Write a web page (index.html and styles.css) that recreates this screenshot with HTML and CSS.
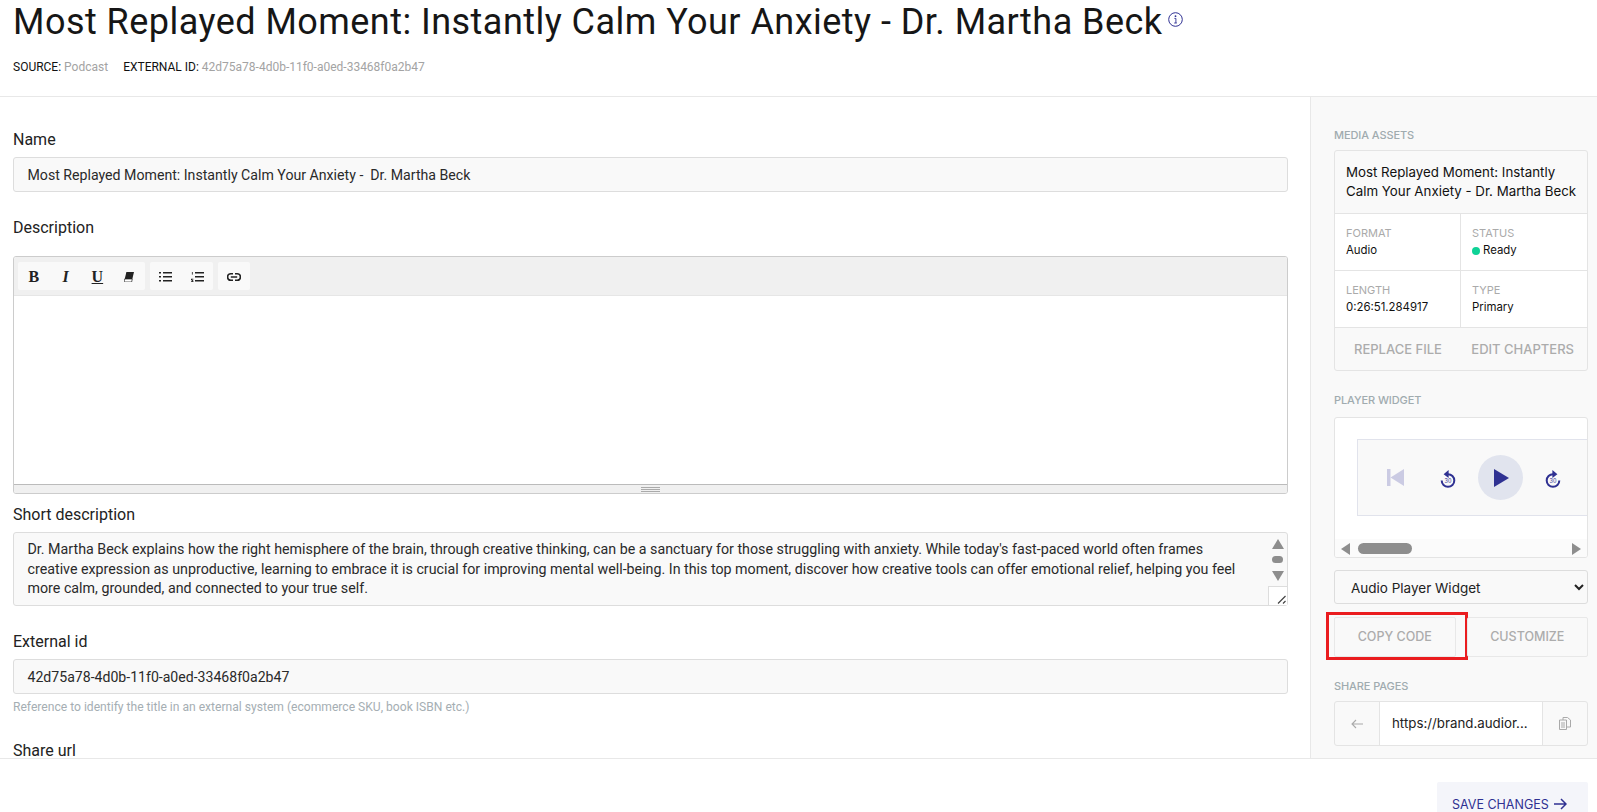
FILE: index.html
```html
<!DOCTYPE html>
<html lang="en">
<head>
<meta charset="utf-8">
<title>Most Replayed Moment</title>
<link rel="stylesheet" href="styles.css">
</head>
<body>
<div class="page">
  <header class="head">
    <h1 class="title"><span>Most Replayed Moment: Instantly Calm Your Anxiety - Dr. Martha Beck</span>
      <svg class="info" width="15" height="15" viewBox="0 0 15 15"><circle cx="7.5" cy="7.5" r="6.8" fill="none" stroke="#2f3192" stroke-width="1"/><circle cx="7.5" cy="4.2" r=".9" fill="#2f3192"/><path d="M6.4 6.4h1.5v4.6M6.2 11h2.6" fill="none" stroke="#2f3192" stroke-width=".9"/></svg>
    </h1>
    <div class="meta"><span class="k">SOURCE:</span> <span class="v">Podcast</span><span class="k gap">EXTERNAL ID:</span> <span class="v">42d75a78-4d0b-11f0-a0ed-33468f0a2b47</span></div>
  </header>
  <main class="body">
    <section class="form">
      <div class="label first">Name</div>
      <div class="field">Most Replayed Moment: Instantly Calm Your Anxiety -&nbsp; Dr. Martha Beck</div>
      <div class="label desc">Description</div>
      <div class="editor">
        <div class="toolbar">
          <div class="group g1">
            <span class="tool b">B</span><span class="tool i">I</span><span class="tool u">U</span>
            <span class="tool"><svg width="10" height="10" viewBox="0 0 10 10"><path d="M2.400 0H10L8.300 7H.7z" fill="#222"/><path d="M.7 7h7.600L7.600 10H0z" fill="#fff" stroke="#222" stroke-width=".7"/></svg></span>
          </div>
          <div class="group g2">
            <span class="tool"><svg width="13" height="10" viewBox="0 0 13 10" fill="#222"><rect x="0" y="0" width="2" height="1.500"/><rect x="4" y="0" width="9" height="1.500"/><rect x="0" y="4" width="2" height="1.500"/><rect x="4" y="4" width="9" height="1.500"/><rect x="0" y="8" width="2" height="1.500"/><rect x="4" y="8" width="9" height="1.500"/></svg></span>
            <span class="tool"><svg width="13" height="10" viewBox="0 0 13 10" fill="#222"><rect x=".9" y="0" width=".8" height="2.600"/><path d="M0 6.800h2.400v.7H1l1.400 1.300V10H0v-.7h1.400L0 7.800z"/><rect x="4" y="0" width="9" height="1.500"/><rect x="4" y="4" width="9" height="1.500"/><rect x="4" y="8" width="9" height="1.500"/></svg></span>
          </div>
          <div class="group g3">
            <span class="tool"><svg width="14" height="8" viewBox="0 0 14 8" fill="none" stroke="#222" stroke-width="1.500"><path d="M6 .8H3.800a3.200 3.200 0 0 0 0 6.400H6M8 .8h2.200a3.200 3.200 0 0 1 0 6.400H8M3.800 4h6.400"/></svg></span>
          </div>
        </div>
        <div class="canvas"></div>
        <div class="status"><i></i><i></i><i></i></div>
      </div>
      <div class="label short">Short description</div>
      <div class="area">
        <p class="area-text">Dr. Martha Beck explains how the right hemisphere of the brain, through creative thinking, can be a sanctuary for those struggling with anxiety. While today's fast-paced world often frames creative expression as unproductive, learning to embrace it is crucial for improving mental well-being. In this top moment, discover how creative tools can offer emotional relief, helping you feel more calm, grounded, and connected to your true self.</p>
        <div class="vbar">
          <span class="up"></span><span class="vthumb"></span><span class="down"></span>
          <span class="grip"><svg width="10" height="10" viewBox="0 0 10 10" fill="none" stroke="#444" stroke-width="1.200"><path d="M1 8.500L8.500 1M6 8.500L8.500 6"/></svg></span>
        </div>
      </div>
      <div class="label ext">External id</div>
      <div class="field id">42d75a78-4d0b-11f0-a0ed-33468f0a2b47</div>
      <div class="hint">Reference to identify the title in an external system (ecommerce SKU, book ISBN etc.)</div>
      <div class="label url">Share url</div>
    </section>
    <aside class="side">
      <div class="cap">MEDIA ASSETS</div>
      <div class="card asset">
        <div class="asset-title">Most Replayed Moment: Instantly Calm Your Anxiety - Dr. Martha Beck</div>
        <div class="cells">
          <div class="cell"><div class="ck">FORMAT</div><div class="cv">Audio</div></div>
          <div class="cell"><div class="ck">STATUS</div><div class="cv"><span class="dot"></span>Ready</div></div>
          <div class="cell"><div class="ck">LENGTH</div><div class="cv">0:26:51.284917</div></div>
          <div class="cell"><div class="ck">TYPE</div><div class="cv">Primary</div></div>
        </div>
        <div class="actions"><span>REPLACE FILE</span><span>EDIT CHAPTERS</span></div>
      </div>
      <div class="cap widget">PLAYER WIDGET</div>
      <div class="card player">
        <div class="stage">
          <div class="box">
            <svg class="prev" width="17" height="17" viewBox="0 0 17 17" fill="#cbcbe3"><rect x="0" y="0" width="3.500" height="17"/><path d="M17 0v17L3.500 8.500z"/></svg>
            <svg class="seek s1" width="16" height="18" viewBox="0 0 16 18"><path d="M8 4.200a6.300 6.300 0 1 1-6.300 6.300" fill="none" stroke="#2f3192" stroke-width="2"/><path d="M8.600 0v8L3.600 4.200z" fill="#2f3192"/><text x="8" y="13" text-anchor="middle" class="sec">30</text></svg>
            <span class="play"><svg width="15" height="18" viewBox="0 0 15 18"><path d="M0 0l15 9-15 9z" fill="#2f3192"/></svg></span>
            <svg class="seek s2" width="16" height="18" viewBox="0 0 16 18"><path d="M8 4.200a6.300 6.300 0 1 0 6.300 6.300" fill="none" stroke="#2f3192" stroke-width="2"/><path d="M7.400 0v8l5-3.800z" fill="#2f3192"/><text x="8" y="13" text-anchor="middle" class="sec">30</text></svg>
          </div>
        </div>
        <div class="hbar"><span class="left"></span><span class="hthumb"></span><span class="right"></span></div>
      </div>
      <select class="pick"><option>Audio Player Widget</option></select>
      <div class="btns">
        <div class="btn copy">COPY CODE<span class="mark"></span></div>
        <div class="btn">CUSTOMIZE</div>
      </div>
      <div class="cap pages">SHARE PAGES</div>
      <div class="share">
        <span class="sbtn"><svg width="12" height="10" viewBox="0 0 12 10" fill="none" stroke="#aaa" stroke-width="1.100"><path d="M12 5H1M5 1L1 5l4 4"/></svg></span>
        <span class="link">https://brand.audior...</span>
        <span class="sbtn"><svg width="12" height="13" viewBox="0 0 12 13" fill="none" stroke="#aaa" stroke-width="1"><path d="M.5 3h7v9.500h-7zM4 3V.5h4.500L11.500 3v7H7.500M2 6h4M2 8h4M2 10h4"/></svg></span>
      </div>
    </aside>
  </main>
  <footer class="foot">
    <div class="save">SAVE CHANGES <svg width="13" height="12" viewBox="0 0 13 12" fill="none" stroke="#2f3192" stroke-width="1.500"><path d="M0 6h12M7 1l5 5-5 5"/></svg></div>
  </footer>
</div>
</body>
</html>
```
FILE: styles.css
```css
* { box-sizing: border-box; }
html, body { margin: 0; height: 100%; overflow: hidden; background: #fff; }
body { font-family: "Roboto", "Liberation Sans", sans-serif; color: #222; }
.page { height: 100vh; display: flex; flex-direction: column; overflow: hidden; }

.head { height: 97px; flex: none; padding: 0 13px; border-bottom: 1px solid #e8e8e8; }
.title { margin: 0; display: flex; align-items: flex-start; font-family: "Roboto", sans-serif; font-weight: 400; font-size: 36px; line-height: 44px; color: #161616; letter-spacing: .46px; white-space: nowrap; }
.info { margin: 12px 0 0 5px; }
.meta { margin-top: 14px; font-size: 12px; line-height: 16px; padding-top: 1px; }
.k { color: #111; }
.v { color: #a3a3a3; }
.gap { margin-left: 15px; }

.body { flex: 1; min-height: 0; display: flex; overflow: hidden; }
.form { flex: 1; min-width: 0; padding: 32px 22px 0 13px; overflow: hidden; }
.label { font-size: 16px; line-height: 20px; color: #222; padding-top: 1px; margin-bottom: 7px; height: 21px; }
.desc { margin-top: 25px; margin-bottom: 18px; }
.short { margin-top: 10px; }
.ext { margin-top: 25px; }
.url { margin-top: 25px; }
.field { height: 35px; padding: 0 13.500px; border: 1px solid #ddd; border-radius: 3px; background: #f9f9f9; font-size: 14.150px; line-height: 34px; color: #2a2a2a; }
.id { font-size: 14.100px; }
.hint { margin-top: 5px; font-size: 12.100px; line-height: 16px; color: #a5aeb3; }

.editor { height: 238px; border: 1px solid #ccc; border-radius: 3px; display: flex; flex-direction: column; overflow: hidden; }
.toolbar { height: 39px; flex: none; background: #f0f0f0; border-bottom: 1px solid #e6e6e6; padding: 5px 0 0 4px; display: flex; gap: 5px; }
.group { height: 28px; background: #f9f9f9; border-radius: 2px; display: flex; padding-top: 1px; }
.g1 { width: 127px; }
.g2 { width: 63px; }
.g3 { width: 32px; }
.tool { flex: 1; display: flex; align-items: center; justify-content: center; font-family: "Liberation Serif", serif; font-size: 16px; color: #222; }
.b { font-weight: 700; }
.i { font-style: italic; font-weight: 700; }
.u { text-decoration: underline; font-weight: 700; }
.canvas { flex: 1; background: #fff; }
.status { height: 9px; flex: none; background: #f0f0f0; border-top: 1px solid #bbb; display: flex; flex-direction: column; align-items: center; justify-content: center; gap: 1px; }
.status i { display: block; width: 19px; height: 1px; background: #aaa; }

.area { height: 74px; border: 1px solid #ddd; border-radius: 3px; background: #f9f9f9; display: flex; }
.area-text { flex: 1; margin: 0; padding: 7px 26px 0 13.500px; font-size: 14.250px; line-height: 19.500px; color: #2a2a2a; }
.vbar { width: 19px; flex: none; display: flex; flex-direction: column; align-items: center; padding-top: 6px; position: relative; }
.up, .down { width: 0; height: 0; border-left: 6px solid transparent; border-right: 6px solid transparent; }
.up { border-bottom: 10px solid #8e8e8e; }
.down { border-top: 10px solid #8e8e8e; }
.vthumb { width: 11px; height: 7px; margin: 7px 0 8px; border-radius: 4px; background: #8e8e8e; }
.grip { margin-top: 5px; width: 19px; height: 20px; background: #fff; border: 1px solid #ddd; border-right: 0; border-bottom: 0; display: flex; align-items: flex-end; justify-content: flex-end; }

.side { width: 287px; flex: none; background: #f9f9f9; border-left: 1px solid #e8e8e8; padding: 30px 9px 0 23px; overflow: hidden; }
.cap { font-family: "Inter", sans-serif; font-size: 11px; line-height: 16px; font-weight: 500; color: #a0abaf; letter-spacing: -.1px; margin-bottom: 7px; }
.widget { margin-top: 21px; margin-bottom: 9px; }
.pages { margin-top: 21px; }
.card { border: 1px solid #e4e4e4; border-radius: 3px; background: #f9f9f9; overflow: hidden; }
.asset { height: 221px; }
.asset-title { height: 63px; padding: 12px 4px 0 11px; font-family: "Inter", sans-serif; font-size: 13.300px; line-height: 19px; color: #111; border-bottom: 1px solid #e4e4e4; }
.cells { display: grid; grid-template-columns: 126px 1fr; background: #fff; font-family: "Inter", sans-serif; }
.cell { height: 57px; padding: 11px 11px 0; border-bottom: 1px solid #e4e4e4; }
.cell:nth-child(odd) { border-right: 1px solid #e4e4e4; }
.ck { font-size: 11px; line-height: 17px; color: #aaa; }
.cv { font-size: 11.400px; line-height: 17px; color: #111; display: flex; align-items: center; }
.dot { width: 8px; height: 8px; border-radius: 50%; background: #0ed296; margin-right: 3px; }
.actions { height: 42px; display: flex; align-items: center; justify-content: space-between; padding: 0 13px 0 19px; font-family: "Inter", sans-serif; font-size: 13px; font-weight: 500; color: #acacac; }

.player { height: 141px; background: #fff; }
.stage { height: 121px; padding: 21px 0 0 22px; overflow: hidden; }
.box { width: 260px; height: 77px; border: 1px solid #e1e3ec; background: #f9f9f9; display: flex; align-items: center; position: relative; }
.prev { margin-left: 29px; }
.s1 { margin-left: 36px; margin-top: 3px; }
.play { width: 45px; height: 45px; margin-left: 22px; border-radius: 50%; background: #e1e4ee; display: flex; align-items: center; justify-content: center; padding-left: 2px; }
.s2 { margin-left: 22px; margin-top: 3px; }
.sec { font-family: "Inter", sans-serif; font-size: 5.500px; fill: #2f3192; }
.hbar { height: 19px; background: #fbfbfb; display: flex; align-items: center; padding: 0 6px; }
.left, .right { width: 0; height: 0; border-top: 6px solid transparent; border-bottom: 6px solid transparent; }
.left { border-right: 9px solid #8e8e8e; }
.right { border-left: 9px solid #8e8e8e; margin-left: auto; }
.hthumb { width: 54px; height: 11px; margin-left: 8px; border-radius: 6px; background: #8e8e8e; }

.pick { display: block; width: 100%; height: 34px; margin-top: 12px; padding: 2px 12px 0; border: 1px solid #ddd; border-radius: 3px; background: #f9f9f9; font-family: "Inter", sans-serif; font-size: 13.500px; color: #222; }
.btns { display: flex; gap: 11px; margin-top: 13px; }
.btn { flex: 1; height: 40px; padding-bottom: 1px; position: relative; display: flex; align-items: center; justify-content: center; border: 1px solid #e8e8e8; border-radius: 2px; font-family: "Inter", sans-serif; font-size: 12.500px; font-weight: 500; color: #acacac; }
.mark { position: absolute; left: -9px; right: -13px; top: -6px; bottom: -4px; border: 3px solid #ea1c1f; }

.share { height: 45px; display: flex; border: 1px solid #e4e4e4; border-radius: 3px; }
.sbtn { width: 44px; flex: none; display: flex; align-items: center; justify-content: center; }
.link { flex: 1; min-width: 0; padding: 0 12px; background: #fff; border-left: 1px solid #e4e4e4; border-right: 1px solid #e4e4e4; font-family: "Inter", sans-serif; font-size: 13.300px; line-height: 43px; color: #222; white-space: nowrap; overflow: hidden; }

.foot { height: 54px; flex: none; border-top: 1px solid #e8e8e8; padding: 23px 9px 0 0; display: flex; justify-content: flex-end; }
.save { width: 151px; height: 50px; flex: none; background: #f4f5fa; border-radius: 2px; padding: 14px 0 0 15px; font-family: "Inter", sans-serif; font-size: 12.500px; line-height: 18px; color: #2f3192; white-space: nowrap; }
.save svg { vertical-align: -1px; margin-left: 2px; }
```
